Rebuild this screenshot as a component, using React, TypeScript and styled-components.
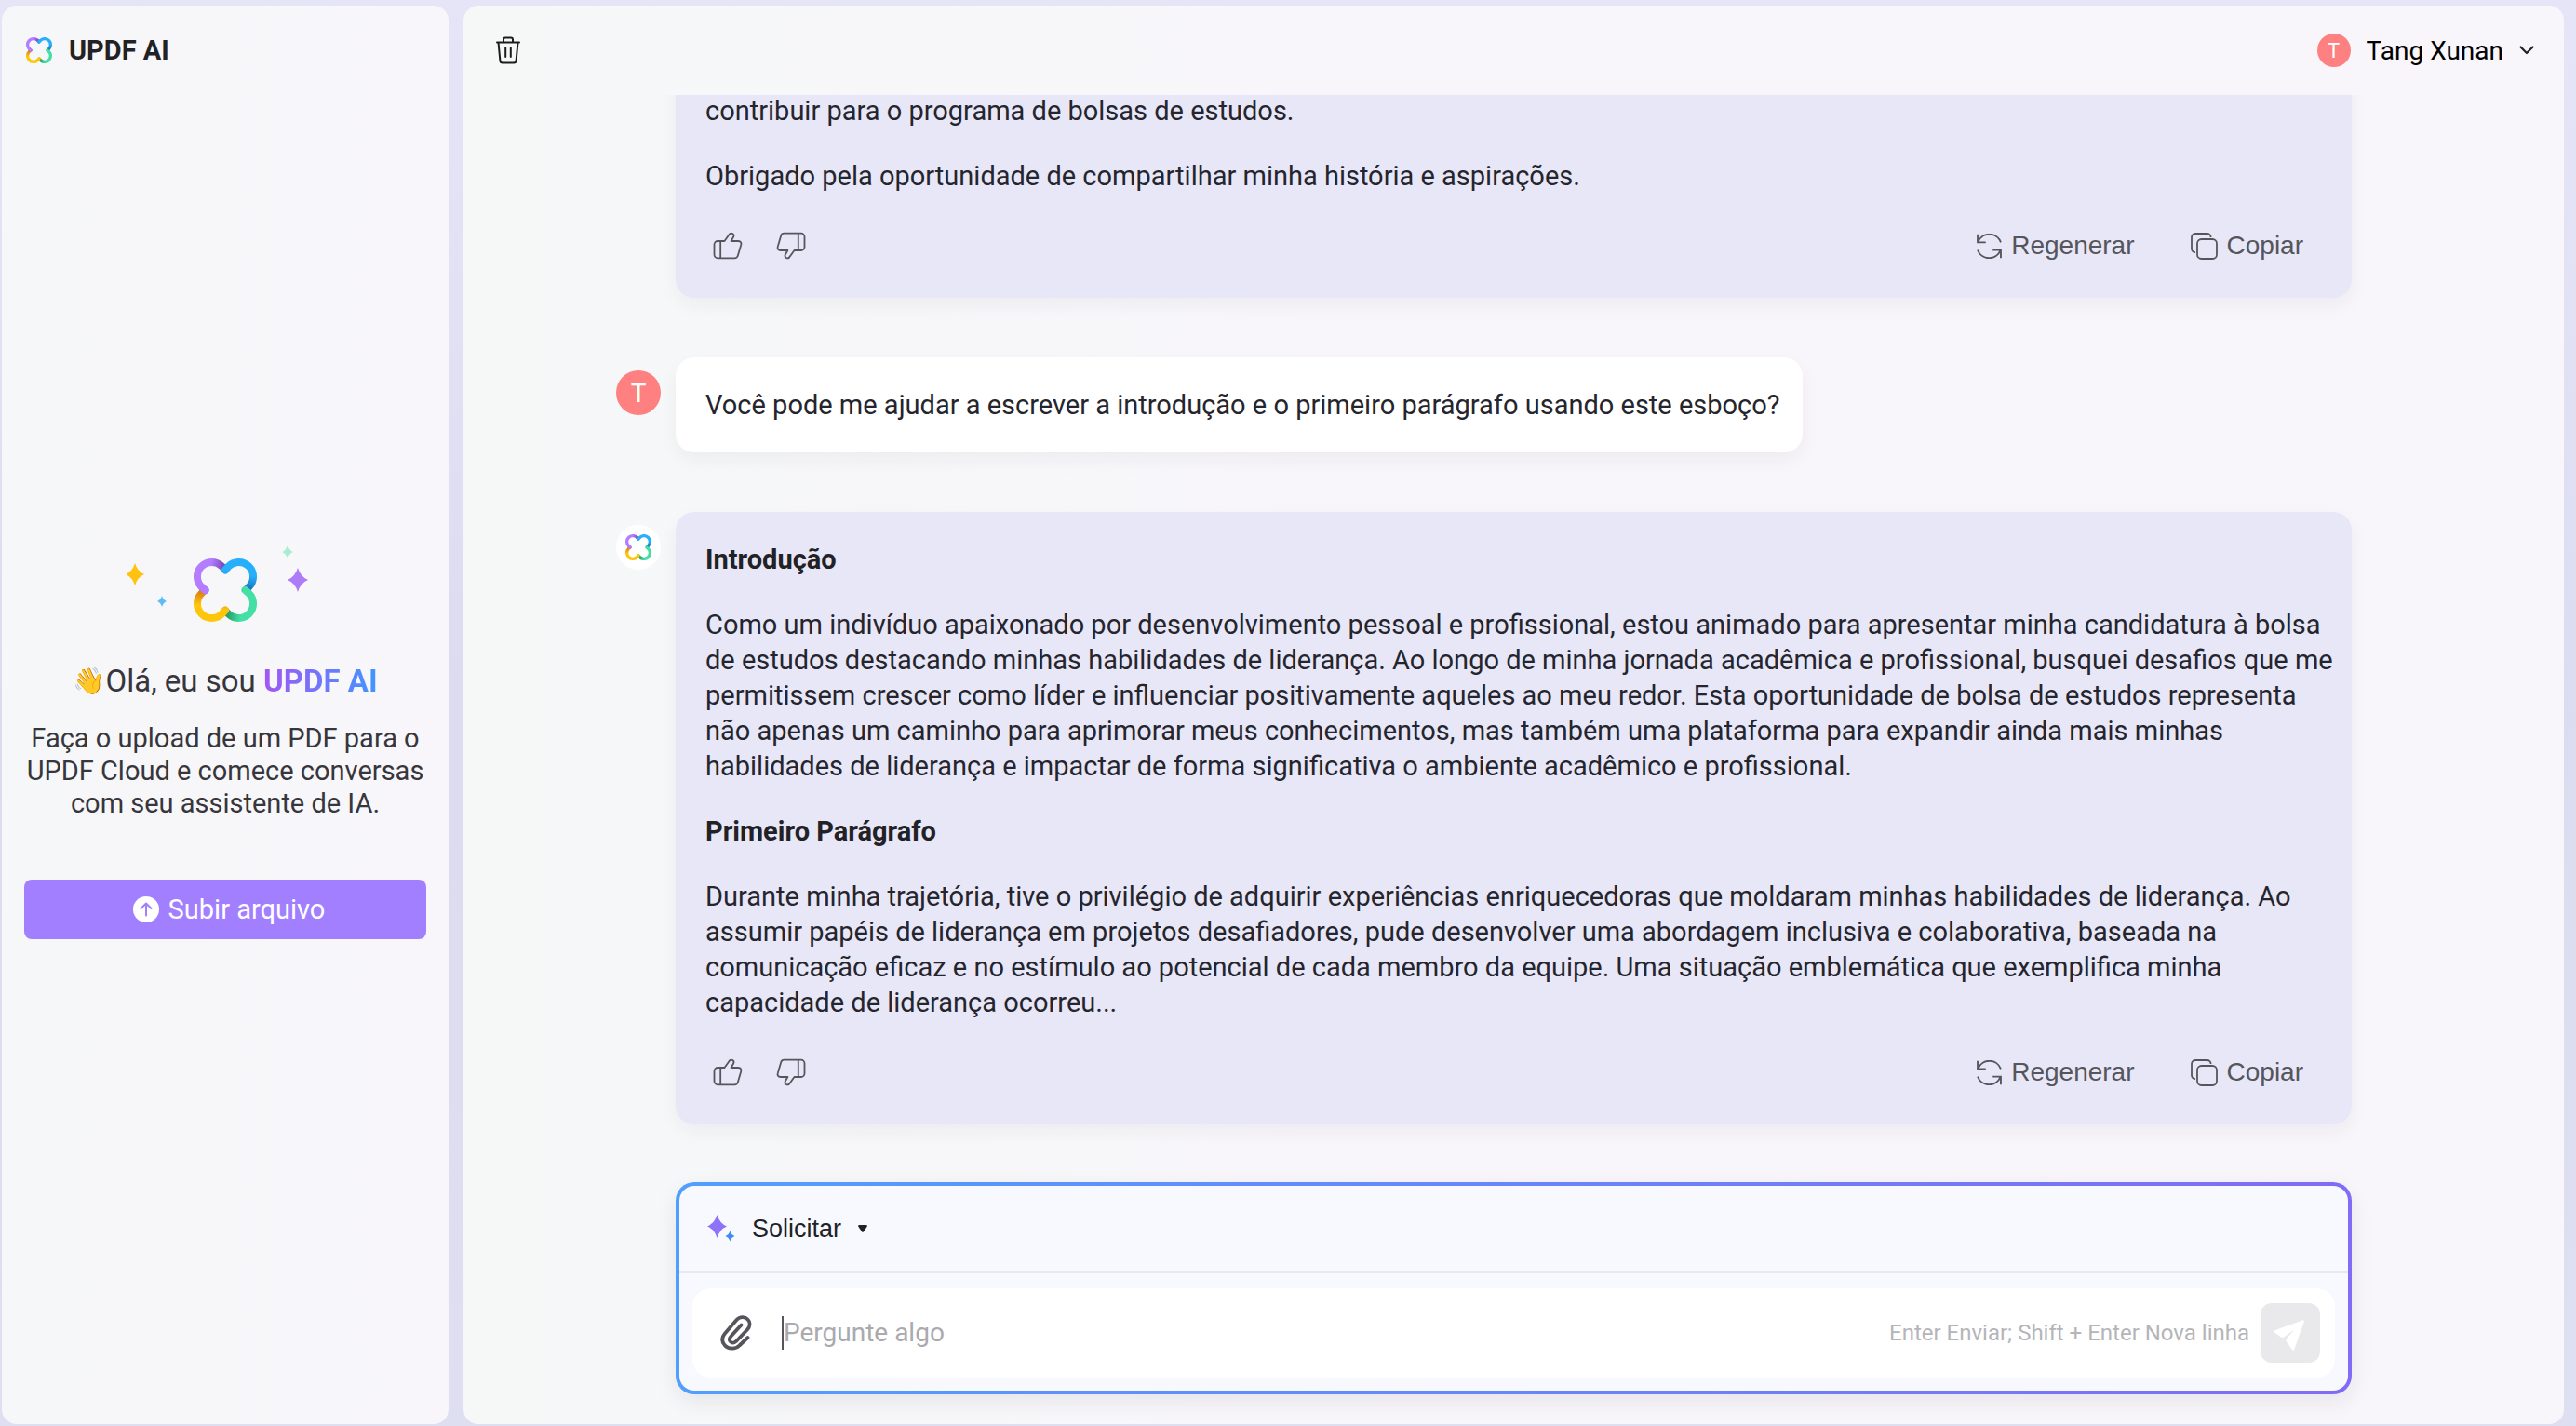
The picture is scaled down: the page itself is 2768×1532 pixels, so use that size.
import React, { useId } from "react";
import styled, { createGlobalStyle } from "styled-components";

const GlobalStyle = createGlobalStyle`
  *, *::before, *::after { box-sizing: border-box; }
  body {
    margin: 0;
    font-family: Roboto, "Liberation Sans", sans-serif;
    color: #25252d;
    background: linear-gradient(180deg, #e6e5f8 0%, #dcdcf0 50%, #dedff0 100%);
  }
  button, input { font: inherit; color: inherit; }
  button { border: 0; background: none; padding: 0; cursor: pointer; }
  h1, h2, h3, p { margin: 0; }
`;

const Page = styled.div`
  display: grid;
  grid-template-columns: 480px minmax(0, 1fr);
  gap: 16px;
  height: 100vh;
  padding: 6px 13px 2px 2px;
`;

const Sidebar = styled.aside`
  display: flex;
  flex-direction: column;
  min-height: 0;
  padding: 0 24px;
  border-radius: 16px;
  background: linear-gradient(90deg, #f6f7f9, #f8f6fa);
`;

const Brand = styled.header`
  display: flex;
  align-items: center;
  gap: 18px;
  height: 96px;
  padding: 0 2px;
`;

const BrandName = styled.h1`
  font-size: 29px;
  line-height: 38px;
  font-weight: 700;
  color: #222226;
`;

const Welcome = styled.div`
  flex: 1;
  display: flex;
  flex-direction: column;
  align-items: center;
  justify-content: center;
  padding-bottom: 44px;
  text-align: center;
  color: #36363c;
`;

const Greeting = styled.h2`
  display: flex;
  align-items: center;
  margin-top: 40px;
  font-size: 33px;
  line-height: 40px;
  font-weight: 400;
  white-space: pre;
`;

const Wave = styled.span`
  font-size: 28px;
`;

const GradientName = styled.strong`
  font-weight: 700;
  background: linear-gradient(90deg, #a257f5, #3f96ff);
  background-clip: text;
  -webkit-background-clip: text;
  color: transparent;
`;

const Hint = styled.p`
  margin-top: 24px;
  font-size: 29px;
  line-height: 35px;
`;

const UploadButton = styled.button`
  display: flex;
  align-items: center;
  justify-content: center;
  gap: 10px;
  width: 100%;
  height: 64px;
  margin-top: 64px;
  padding-left: 8px;
  border-radius: 8px;
  background: #a17fff;
  color: #fff;
  font-size: 29px;
`;

const Main = styled.main`
  display: flex;
  flex-direction: column;
  min-width: 0;
  min-height: 0;
  padding-bottom: 32px;
  border-radius: 16px;
  background: linear-gradient(90deg, #f6f8f8, #f8f6fa 40%, #f8f6fa);
`;

const TopBar = styled.header`
  display: flex;
  align-items: center;
  justify-content: space-between;
  flex: none;
  height: 96px;
  padding: 0 32px 0 35px;
`;

const IconButton = styled.button`
  display: grid;
  place-items: center;
`;

const Account = styled.button`
  display: flex;
  align-items: center;
  gap: 17px;
  font-size: 28px;
  color: #000;
`;

const Avatar = styled.span<{ $size: number; $plain?: boolean }>`
  display: grid;
  place-items: center;
  width: ${(p) => p.$size}px;
  height: ${(p) => p.$size}px;
  border-radius: 50%;
  background: ${(p) => (p.$plain ? "#fff" : "#ff8080")};
  color: #fff;
  font-size: ${(p) => (p.$size > 40 ? 28 : 22)}px;
`;

const Thread = styled.section`
  flex: 1;
  display: flex;
  flex-direction: column;
  justify-content: flex-end;
  gap: 64px;
  min-height: 0;
  padding-bottom: 62px;
  overflow: hidden;
`;

const Row = styled.div`
  flex: none;
  display: grid;
  grid-template-columns: 228px minmax(0, 1fr) 228px;
`;

const Speaker = styled.div`
  grid-column: 1;
  justify-self: end;
  padding: 14px 16px 0 0;
`;

const Bubble = styled.article<{ $own?: boolean }>`
  grid-column: 2;
  justify-self: ${(p) => (p.$own ? "start" : "stretch")};
  display: flex;
  flex-direction: column;
  gap: 32px;
  padding: 32px ${(p) => (p.$own ? 24 : 8)}px 32px 32px;
  border-radius: 20px;
  background: ${(p) => (p.$own ? "#fff" : "#e8e7f7")};
  box-shadow: 0 8px 20px rgba(40, 30, 60, 0.05);
  font-size: 29px;
  line-height: 38px;
`;

const BubbleTitle = styled.h3`
  font-size: 29px;
  line-height: 38px;
  font-weight: 700;
  color: #222226;
`;

const Actions = styled.footer`
  display: flex;
  align-items: center;
  justify-content: space-between;
  height: 48px;
  padding-right: 28px;
  color: #55555b;
`;

const ActionGroup = styled.div<{ $gap: number }>`
  display: flex;
  gap: ${(p) => p.$gap}px;
`;

const RateButton = styled(IconButton)`
  width: 48px;
  height: 48px;
`;

const ActionButton = styled.button`
  display: flex;
  align-items: center;
  gap: 10px;
  height: 48px;
  padding: 0 16px;
  font-family: "Liberation Sans", Arial, sans-serif;
  font-size: 28px;
`;

const Composer = styled.form`
  grid-column: 2;
  border: 4px solid transparent;
  border-radius: 20px;
  background:
    linear-gradient(#f8f9fe, #f8f9fe) padding-box,
    linear-gradient(90deg, #519ffd, #806cf6) border-box;
  box-shadow: 0 8px 24px rgba(40, 30, 60, 0.08);
`;

const PromptBar = styled.div`
  display: flex;
  align-items: center;
  height: 94px;
  padding: 0 30px;
  border-bottom: 2px solid #e7e7ef;
`;

const PromptButton = styled.button`
  display: flex;
  align-items: center;
  gap: 18px;
  font-family: "Liberation Sans", Arial, sans-serif;
  font-size: 27px;
  color: #222226;
`;

const InputBar = styled.div`
  display: flex;
  align-items: center;
  height: 96px;
  margin: 16px 14px 14px;
  padding: 0 16px 0 30px;
  border-radius: 20px;
  background: #fff;
`;

const Caret = styled.span`
  width: 2px;
  height: 36px;
  margin-left: 32px;
  background: #55555b;
`;

const Question = styled.input`
  flex: 1;
  min-width: 0;
  height: 48px;
  padding: 0 0 2px;
  border: 0;
  outline: 0;
  background: none;
  font-size: 28px;
  &::placeholder { color: #a9a9ae; opacity: 1; }
`;

const KeyHint = styled.span`
  margin-right: 12px;
  font-size: 24px;
  color: #b5b5b9;
`;

const SendButton = styled(IconButton)`
  width: 64px;
  height: 64px;
  border-radius: 12px;
  background: #e9e9ec;
`;

function LogoShape() {
  const id = useId();
  return (
    <>
      <defs>
        <linearGradient id={`${id}p`} gradientUnits="userSpaceOnUse" x1="18" y1="8" x2="33" y2="11">
          <stop offset="0" stopColor="#b47dff" />
          <stop offset="1" stopColor="#7446b4" />
        </linearGradient>
        <linearGradient id={`${id}b`} gradientUnits="userSpaceOnUse" x1="60" y1="18" x2="57" y2="34">
          <stop offset="0" stopColor="#27affc" />
          <stop offset="1" stopColor="#176db8" />
        </linearGradient>
        <linearGradient id={`${id}g`} gradientUnits="userSpaceOnUse" x1="51" y1="58" x2="36" y2="56">
          <stop offset="0" stopColor="#43dfa4" />
          <stop offset="1" stopColor="#249b66" />
        </linearGradient>
        <linearGradient id={`${id}y`} gradientUnits="userSpaceOnUse" x1="9" y1="51" x2="12" y2="35">
          <stop offset="0" stopColor="#fdc60a" />
          <stop offset="1" stopColor="#d97a10" />
        </linearGradient>
      </defs>
      <g fill="none" strokeWidth="8" strokeLinecap="round">
        <path stroke={`url(#${id}p)`} d="M12.5 34 8.5 30.5A15.5 15.5 0 0 1 30.5 8.5L33 11" />
        <path stroke={`url(#${id}b)`} d="M34 12.5 37.5 8.5A15.5 15.5 0 0 1 59.5 30.5L57 33" />
        <path stroke={`url(#${id}g)`} d="M55.5 34 59.5 37.5A15.5 15.5 0 0 1 37.5 59.5L35 57" />
        <path stroke={`url(#${id}y)`} d="M34 55.5 30.5 59.5A15.5 15.5 0 0 1 8.5 37.5L11 35" />
        <path stroke="#b47dff" d="M12.5 34 8.5 30.5" />
      </g>
    </>
  );
}

function Logo({ size }: { size: number }) {
  return (
    <svg width={size} height={size} viewBox="0 0 68 68" aria-hidden="true">
      <LogoShape />
    </svg>
  );
}

function Star({ x, y, w, h, fill }: { x: number; y: number; w: number; h: number; fill: string }) {
  const a = w * 0.26;
  const b = h * 0.26;
  return (
    <path
      fill={fill}
      d={`M${x} ${y - h}Q${x + a} ${y - b} ${x + w} ${y}Q${x + a} ${y + b} ${x} ${y + h}Q${x - a} ${y + b} ${x - w} ${y}Q${x - a} ${y - b} ${x} ${y - h}Z`}
    />
  );
}

function HeroArt() {
  return (
    <svg width="212" height="92" viewBox="0 0 212 92" aria-hidden="true">
      <Star x={9} y={37} w={10} h={12} fill="#fec20f" />
      <Star x={38} y={66} w={5} h={6} fill="#5ebcf5" />
      <Star x={173} y={13} w={6} h={7} fill="#a9ecd2" />
      <Star x={184} y={43} w={11} h={13} fill="#ad7bf8" />
      <g transform="translate(72 20)">
        <LogoShape />
      </g>
    </svg>
  );
}

function ThumbIcon({ down }: { down?: boolean }) {
  return (
    <svg width="32" height="32" viewBox="0 0 32 32" fill="none" stroke="currentColor" strokeWidth="1.8" strokeLinejoin="round" aria-hidden="true">
      <path
        transform={down ? "rotate(180 16 16)" : undefined}
        d="M8.2 11H5.2A3.7 3.7 0 0 0 1.5 14.7V25.6A3.7 3.7 0 0 0 5.2 29.3H23.5C25.2 29.3 26.3 28.4 26.8 26.8L30.2 15.2C31 12.8 29.8 11 27.4 11H19.6L22.3 6.2C23.3 3.6 20 1.4 17.9 3.5L12.5 11H8.2V29.3"
      />
    </svg>
  );
}

function RegenerateIcon() {
  return (
    <svg width="27" height="27" viewBox="0 0 26 26" fill="none" stroke="currentColor" strokeWidth="1.8" aria-hidden="true">
      <path d="M1 .8V9H9.4M1.4 8.8A12.6 12.6 0 0 1 25 9M25 25.2V17H16.6M24.6 17.2A12.6 12.6 0 0 1 1 17" />
    </svg>
  );
}

function CopyIcon() {
  return (
    <svg width="29" height="29" viewBox="0 0 29 29" fill="none" stroke="currentColor" strokeWidth="1.8" aria-hidden="true">
      <rect x="7" y="7" width="21" height="21" rx="4.5" />
      <path d="M21.6 5A4 4 0 0 0 17.6 1H5A4 4 0 0 0 1 5V17.4A4 4 0 0 0 5 21.2" />
    </svg>
  );
}

function MessageActions() {
  return (
    <Actions>
      <ActionGroup $gap={20}>
        <RateButton type="button" aria-label="Gostei"><ThumbIcon /></RateButton>
        <RateButton type="button" aria-label="Não gostei"><ThumbIcon down /></RateButton>
      </ActionGroup>
      <ActionGroup $gap={28}>
        <ActionButton type="button"><RegenerateIcon />Regenerar</ActionButton>
        <ActionButton type="button"><CopyIcon />Copiar</ActionButton>
      </ActionGroup>
    </Actions>
  );
}

export default function App() {
  return (
    <>
      <GlobalStyle />
      <Page>
        <Sidebar>
          <Brand>
            <Logo size={28} />
            <BrandName>UPDF AI</BrandName>
          </Brand>
          <Welcome>
            <HeroArt />
            <Greeting>
              <Wave>👋</Wave>
              <span>Olá, eu sou </span>
              <GradientName>UPDF AI</GradientName>
            </Greeting>
            <Hint>Faça o upload de um PDF para o UPDF Cloud e comece conversas com seu assistente de IA.</Hint>
            <UploadButton type="button">
              <svg width="28" height="28" viewBox="0 0 28 28" aria-hidden="true">
                <circle cx="14" cy="14" r="14" fill="#fff" />
                <path d="M14 20.5V8M8.5 13 14 7.5 19.5 13" fill="none" stroke="#a17fff" strokeWidth="2" strokeLinecap="round" strokeLinejoin="round" />
              </svg>
              Subir arquivo
            </UploadButton>
          </Welcome>
        </Sidebar>

        <Main>
          <TopBar>
            <IconButton type="button" aria-label="Excluir conversa">
              <svg width="26" height="30" viewBox="0 0 26 30" fill="none" stroke="#1c1c1c" strokeWidth="2" strokeLinecap="round" strokeLinejoin="round" aria-hidden="true">
                <path d="M1 6.5H25M8 6.5V3.5A2 2 0 0 1 10 1.5H16A2 2 0 0 1 18 3.5V6.5M2.5 6.5 4.4 26.2A2.5 2.5 0 0 0 6.9 28.5H19.1A2.5 2.5 0 0 0 21.6 26.2L23.5 6.5M10.2 12.5V22M15.8 12.5V22" />
              </svg>
            </IconButton>
            <Account type="button">
              <Avatar $size={36}>T</Avatar>
              Tang Xunan
              <svg width="16" height="10" viewBox="0 0 16 10" fill="none" stroke="#222" strokeWidth="2.2" strokeLinecap="round" strokeLinejoin="round" aria-hidden="true">
                <path d="M1.5 1.5 8 8 14.5 1.5" />
              </svg>
            </Account>
          </TopBar>

          <Thread>
            <Row>
              <Bubble>
                <p>contribuir para o programa de bolsas de estudos.</p>
                <p>Obrigado pela oportunidade de compartilhar minha história e aspirações.</p>
                <MessageActions />
              </Bubble>
            </Row>
            <Row>
              <Speaker><Avatar $size={48}>T</Avatar></Speaker>
              <Bubble $own>
                <p>Você pode me ajudar a escrever a introdução e o primeiro parágrafo usando este esboço?</p>
              </Bubble>
            </Row>
            <Row>
              <Speaker><Avatar $size={48} $plain><Logo size={28} /></Avatar></Speaker>
              <Bubble>
                <BubbleTitle>Introdução</BubbleTitle>
                <p>
                  Como um indivíduo apaixonado por desenvolvimento pessoal e profissional, estou animado para apresentar minha candidatura à bolsa de estudos destacando minhas habilidades de liderança. Ao longo de minha jornada acadêmica e profissional, busquei desafios que me permitissem crescer como líder e influenciar positivamente aqueles ao meu redor. Esta oportunidade de bolsa de estudos representa não apenas um caminho para aprimorar meus conhecimentos, mas também uma plataforma para expandir ainda mais minhas habilidades de liderança e impactar de forma significativa o ambiente acadêmico e profissional.
                </p>
                <BubbleTitle>Primeiro Parágrafo</BubbleTitle>
                <p>
                  Durante minha trajetória, tive o privilégio de adquirir experiências enriquecedoras que moldaram minhas habilidades de liderança. Ao assumir papéis de liderança em projetos desafiadores, pude desenvolver uma abordagem inclusiva e colaborativa, baseada na comunicação eficaz e no estímulo ao potencial de cada membro da equipe. Uma situação emblemática que exemplifica minha capacidade de liderança ocorreu...
                </p>
                <MessageActions />
              </Bubble>
            </Row>
          </Thread>

          <Row>
            <Composer onSubmit={(e: React.FormEvent) => e.preventDefault()}>
              <PromptBar>
                <PromptButton type="button">
                  <svg width="30" height="30" viewBox="0 0 30 30" aria-hidden="true">
                    <Star x={10.5} y={12.5} w={10.5} h={12.5} fill="#8f72fa" />
                    <Star x={24.5} y={23} w={5} h={5.5} fill="#3f8cf2" />
                  </svg>
                  Solicitar
                  <svg width="10" height="8" viewBox="0 0 10 8" aria-hidden="true">
                    <path d="M1 0H9Q10.500 .5 9.500 2L6 7.200Q5 8.300 4 7.200L.5 2Q-.5 .5 1 0Z" fill="#222226" />
                  </svg>
                </PromptButton>
              </PromptBar>
              <InputBar>
                <IconButton type="button" aria-label="Anexar arquivo">
                  <svg width="34" height="38" viewBox="0 0 34 38" fill="none" stroke="#55555b" strokeWidth="3.8" strokeLinecap="round" strokeLinejoin="round" aria-hidden="true">
                    <path d="M29.500 24 20.500 32.500C16 37 8.500 36.500 5 32.500C1.500 28.500 1 24 5 19.500L17.500 5C21 1.300 26.500 1.200 29.500 4.500C32.500 7.500 32 12 29 15.500L17 28C15 30 12.500 30 11 28.500C9.300 26.800 9.800 24.500 11.500 22.500L22.500 10.500" />
                  </svg>
                </IconButton>
                <Caret />
                <Question type="text" aria-label="Pergunte algo" placeholder="Pergunte algo" />
                <KeyHint>Enter Enviar; Shift + Enter Nova linha</KeyHint>
                <SendButton type="submit" aria-label="Enviar">
                  <svg width="64" height="64" viewBox="0 0 64 64" aria-hidden="true">
                    <path fill="#fff" d="M45 18.500 16 29Q13.500 30.500 15.500 31.800L22 36.600Q24 37.500 25.500 36.200L36 28.500 27.800 38.500Q27 40 28 41.500L34 50Q35.500 51.600 36.300 49.500L46.800 20Q47.200 17.800 45 18.500Z" />
                  </svg>
                </SendButton>
              </InputBar>
            </Composer>
          </Row>
        </Main>
      </Page>
    </>
  );
}
